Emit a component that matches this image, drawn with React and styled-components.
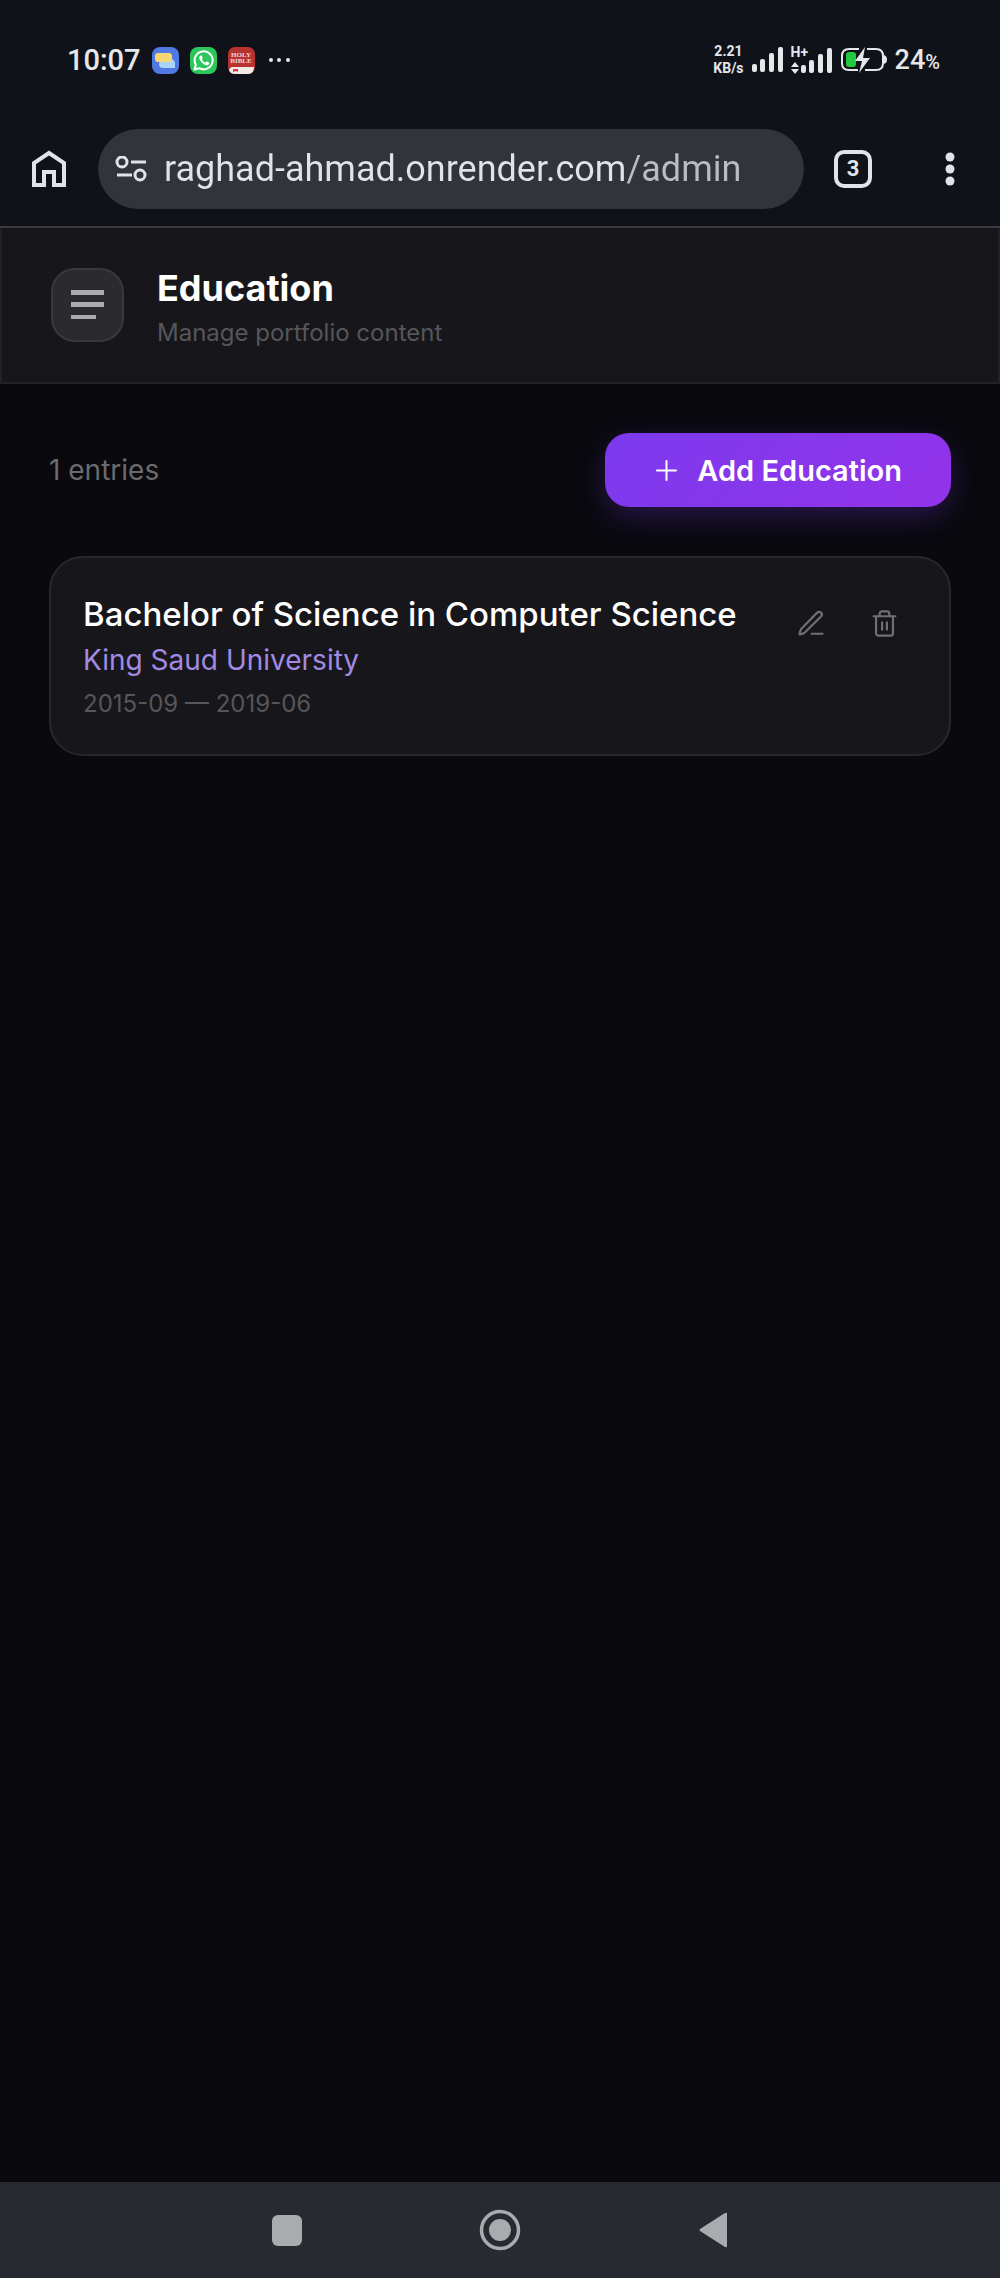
import React from "react";
import styled, { createGlobalStyle } from "styled-components";

const GlobalStyle = createGlobalStyle`
  *, *::before, *::after {
    box-sizing: border-box;
  }
  body {
    margin: 0;
    background: #09090e;
    color: #ffffff;
    font-family: "Inter", "Liberation Sans", sans-serif;
  }
  button {
    font: inherit;
    color: inherit;
    border: none;
    background: none;
    padding: 0;
    cursor: pointer;
  }
  h1, h2, p {
    margin: 0;
  }
  svg {
    display: block;
    flex-shrink: 0;
  }
`;

const entries = [
  {
    id: 1,
    degree: "Bachelor of Science in Computer Science",
    school: "King Saud University",
    start: "2015-09",
    end: "2019-06",
  },
];

const Signal = () => (
  <svg width="31" height="26" viewBox="0 0 31 26" fill="#e6e7ea">
    <rect x="0" y="17" width="5" height="8" rx="2" />
    <rect x="8" y="12" width="5" height="13" rx="2" />
    <rect x="17" y="6" width="5" height="19" rx="2" />
    <rect x="26" y="0" width="5" height="25" rx="2" />
  </svg>
);

const StatusBar = () => (
  <Status>
    <StatusGroup gap="11px">
      <Clock>10:07</Clock>
      <svg width="27" height="27" viewBox="0 0 27 27">
        <rect width="27" height="27" rx="8" fill="#5079e4" />
        <path d="M8 12h12q3 1 3 5v4H11q-4 0-4-4z" fill="#a9d3f8" />
        <rect x="3" y="6" width="17" height="9" rx="3" fill="#f8d673" />
      </svg>
      <svg width="27" height="27" viewBox="0 0 27 27" fill="none">
        <rect width="27" height="27" rx="8" fill="#2bc75b" />
        <path
          d="M4.500 22.500l1.300-4.800a9 9 0 1 1 3.500 3.500z"
          stroke="#fff"
          strokeWidth="2"
          strokeLinejoin="round"
        />
        <path
          d="M10.500 8.500c-2 1-1.500 3.500.5 6s5 4.500 7 3.500 1.500-2 1-2.500l-2-1c-.8-.3-1.200 1-1.800 1-1 0-3.200-2.300-3.200-3 0-.5 1-1 .7-1.700l-.9-2c-.3-.4-.8-.5-1.300-.3z"
          fill="#fff"
        />
      </svg>
      <svg width="27" height="27" viewBox="0 0 27 27">
        <rect width="27" height="27" rx="7" fill="#b8322f" />
        <path d="M1 23q1-3 4-3h21q0 7-6 7H7q-5 0-6-4z" fill="#f3e9e5" />
        <path d="M5 22h5v3l-2-1-3 1z" fill="#d33a44" />
        <text x="13" y="10" fontSize="7" fontWeight="700" textAnchor="middle" fill="#f0d5cf" fontFamily="Liberation Serif, serif">HOLY</text>
        <text x="13" y="16" fontSize="7" fontWeight="700" textAnchor="middle" fill="#f0d5cf" fontFamily="Liberation Serif, serif">BIBLE</text>
      </svg>
      <svg width="27" height="6" viewBox="0 0 27 6" fill="#e6e7ea">
        <circle cx="5" cy="3" r="2" />
        <circle cx="13" cy="3" r="2" />
        <circle cx="22" cy="3" r="2" />
      </svg>
    </StatusGroup>
    <StatusGroup gap="8px">
      <Speed>
        <span>2.21</span>
        <span>KB/s</span>
      </Speed>
      <Signal />
      <Network>
        <NetworkType>
          <span>H+</span>
          <svg width="8" height="12" viewBox="0 0 8 12" fill="#e6e7ea">
            <path d="M4 0l4 5H0zM4 12l4-5H0z" />
          </svg>
        </NetworkType>
        <Signal />
      </Network>
      <svg width="47" height="26" viewBox="0 0 47 26" fill="none">
        <path
          d="M19 2H9q-7 0-7 7v7q0 7 7 7h9M27 2h9q7 0 7 7v7q0 7-7 7H25"
          stroke="#e6e7ea"
          strokeWidth="2"
        />
        <rect x="6" y="5" width="10" height="15" rx="3" fill="#22c93d" />
        <path d="M25 0L15 14h7l-3 12 11-15h-7z" fill="#e6e7ea" />
        <path d="M44 8q3 1 3 4.500T44 17z" fill="#e6e7ea" />
      </svg>
      <Battery>
        24<small>%</small>
      </Battery>
    </StatusGroup>
  </Status>
);

const BrowserBar = () => (
  <Browser>
    <IconButton aria-label="Home" size="50px">
      <svg width="34" height="38" viewBox="0 0 34 38" fill="none" stroke="#dfe3ea" strokeWidth="4">
        <path d="M2 35V13L17 3l15 10v22H22V22H12v13z" />
      </svg>
    </IconButton>
    <AddressBar>
      <svg width="32" height="26" viewBox="0 0 32 26" fill="none" stroke="#dfe3ea" strokeWidth="3">
        <circle cx="7" cy="6" r="5" />
        <path d="M16 6h15M2 19h15" />
        <circle cx="25" cy="19" r="5" />
      </svg>
      <AddressInput
        aria-label="Address"
        type="text"
        defaultValue="raghad-ahmad.onrender.com/admin"
      />
    </AddressBar>
    <TabsButton aria-label="Open tabs">3</TabsButton>
    <IconButton aria-label="Menu" size="36px">
      <svg width="10" height="34" viewBox="0 0 10 34" fill="#dfe3ea">
        <circle cx="5" cy="5" r="4.500" />
        <circle cx="5" cy="17" r="4.500" />
        <circle cx="5" cy="29" r="4.500" />
      </svg>
    </IconButton>
  </Browser>
);

const Entry = ({ entry }) => (
  <Card>
    <div>
      <Degree>{entry.degree}</Degree>
      <School>{entry.school}</School>
      <Dates>
        {entry.start} — {entry.end}
      </Dates>
    </div>
    <Actions>
      <IconButton aria-label="Edit" size="66px">
        <svg width="29" height="29" viewBox="0 0 24 24" fill="none" stroke="#6f6f74" strokeWidth="1.800" strokeLinecap="round" strokeLinejoin="round">
          <path d="M13 20.500h9" />
          <path d="M17.500 3a2.200 2.200 0 0 1 3.200 3.200L7.500 19.300c-1 .9-2.500 1.400-4.500 1.700.2-2 .6-3.600 1.500-4.700z" />
        </svg>
      </IconButton>
      <IconButton aria-label="Delete" size="66px">
        <svg width="29" height="29" viewBox="0 0 24 24" fill="none" stroke="#6f6f74" strokeWidth="1.800" strokeLinecap="round" strokeLinejoin="round">
          <path d="M3 6h18M19 6v14a2 2 0 0 1-2 2H7a2 2 0 0 1-2-2V6M8 6V4a2 2 0 0 1 2-2h4a2 2 0 0 1 2 2v2M10 11v6M14 11v6" />
        </svg>
      </IconButton>
    </Actions>
  </Card>
);

const App = () => {
  return (
    <React.Fragment>
      <GlobalStyle />
      <Screen>
        <StatusBar />
        <BrowserBar />
        <Header>
          <MenuButton aria-label="Toggle sidebar">
            <svg width="33" height="30" viewBox="0 0 33 30" fill="#acacaf">
              <path d="M0 0h33v5H0zM0 12h33v5H0zM0 25h25v4H0z" />
            </svg>
          </MenuButton>
          <div>
            <Title>Education</Title>
            <Subtitle>Manage portfolio content</Subtitle>
          </div>
        </Header>
        <Main>
          <Toolbar>
            <Count>{entries.length} entries</Count>
            <AddButton>
              <svg width="21" height="21" viewBox="0 0 21 21" stroke="#fff" strokeWidth="2" strokeLinecap="round">
                <path d="M10.500 1v19M1 10.500h19" />
              </svg>
              Add Education
            </AddButton>
          </Toolbar>
          {entries.map((entry) => (
            <Entry key={entry.id} entry={entry} />
          ))}
        </Main>
        <NavBar>
          <IconButton aria-label="Recent apps" size="60px">
            <svg width="30" height="31" viewBox="0 0 30 31" fill="#a9acaf">
              <rect width="30" height="31" rx="6" />
            </svg>
          </IconButton>
          <IconButton aria-label="Home screen" size="60px">
            <svg width="42" height="42" viewBox="0 0 42 42" fill="none">
              <circle cx="21" cy="21" r="18.500" stroke="#a9acaf" strokeWidth="3.500" />
              <circle cx="21" cy="21" r="11" fill="#a9acaf" />
            </svg>
          </IconButton>
          <IconButton aria-label="Back" size="60px">
            <svg width="28" height="36" viewBox="0 0 28 36" fill="#a9acaf">
              <path d="M26 1q2-1 2 1v32q0 2-2 1L1 19q-1-1 0-2z" />
            </svg>
          </IconButton>
        </NavBar>
      </Screen>
    </React.Fragment>
  );
};

const Screen = styled.div`
  display: flex;
  flex-direction: column;
  min-height: 100vh;
`;

const Status = styled.div`
  display: flex;
  align-items: center;
  justify-content: space-between;
  height: 112px;
  padding: 8px 60px 0 67px;
  background: #0f1218;
  color: #e6e7ea;
  font-family: "Roboto", sans-serif;
`;

const StatusGroup = styled.div`
  display: flex;
  align-items: center;
  gap: ${(props) => props.gap};
`;

const Clock = styled.span`
  font-size: 29px;
  font-weight: 500;
`;

const Speed = styled.div`
  display: flex;
  flex-direction: column;
  align-items: center;
  font-size: 14px;
  font-weight: 700;
  line-height: 17px;
`;

const Network = styled.div`
  display: flex;
  align-items: flex-end;
`;

const NetworkType = styled.div`
  display: flex;
  flex-direction: column;
  gap: 4px;
  width: 10px;
  font-size: 14px;
  font-weight: 700;
  line-height: 12px;
`;

const Battery = styled.span`
  font-size: 27px;
  font-weight: 500;

  small {
    font-size: 20px;
  }
`;

const Browser = styled.div`
  display: flex;
  align-items: center;
  height: 116px;
  padding: 0 32px 0 24px;
  background: #0f1218;
  border-bottom: 2px solid #3b3c40;
`;

const IconButton = styled.button`
  display: flex;
  align-items: center;
  justify-content: center;
  width: ${(props) => props.size};
  height: ${(props) => props.size};
`;

const AddressBar = styled.div`
  display: flex;
  align-items: center;
  flex: 1;
  gap: 17px;
  height: 80px;
  margin: 0 30px 0 24px;
  padding: 0 17px;
  border-radius: 40px;
  background: #313439;
`;

// the path part of the address is dimmer than the host
const AddressInput = styled.input`
  flex: 1;
  min-width: 0;
  padding: 0;
  border: none;
  outline: none;
  background: linear-gradient(90deg, #dfe3ea 462px, #b9bcc2 462px);
  background-clip: text;
  color: transparent;
  font-family: "Roboto", sans-serif;
  font-size: 36px;
  line-height: 48px;
`;

const TabsButton = styled.button`
  width: 38px;
  height: 38px;
  margin-right: 60px;
  border: 4px solid #dfe3ea;
  border-radius: 10px;
  color: #dfe3ea;
  font-family: "Roboto", sans-serif;
  font-size: 22px;
  font-weight: 700;
  line-height: 30px;
`;

const Header = styled.header`
  display: flex;
  align-items: center;
  gap: 33px;
  height: 156px;
  padding: 0 49px;
  background: #17171b;
  border: 2px solid #222226;
  border-top: none;
`;

const MenuButton = styled.button`
  display: flex;
  align-items: center;
  justify-content: center;
  width: 73px;
  height: 74px;
  border: 2px solid #39393d;
  border-radius: 24px;
  background: #2b2b2f;
`;

const Title = styled.h1`
  font-size: 36px;
  font-weight: 700;
  line-height: 56px;
`;

const Subtitle = styled.p`
  color: #56565a;
  font-size: 24px;
  line-height: 34px;
`;

const Main = styled.main`
  flex: 1;
  padding: 49px;
`;

const Toolbar = styled.div`
  display: flex;
  align-items: center;
  justify-content: space-between;
  margin-bottom: 49px;
`;

const Count = styled.p`
  color: #6b6b6f;
  font-size: 28px;
`;

const AddButton = styled.button`
  display: flex;
  align-items: center;
  gap: 20px;
  height: 74px;
  padding: 0 49px 0 51px;
  border-radius: 24px;
  background: linear-gradient(135deg, #7c3aed, #9333ea);
  box-shadow: 0 10px 30px -2px rgba(124, 58, 237, 0.3);
  font-size: 29px;
  font-weight: 600;
`;

const Card = styled.article`
  display: flex;
  align-items: flex-start;
  justify-content: space-between;
  padding: 32px 32px 28px;
  border: 2px solid #28282c;
  border-radius: 34px;
  background: #17171b;
`;

const Degree = styled.h2`
  font-size: 33px;
  font-weight: 500;
  line-height: 48px;
`;

const School = styled.p`
  color: #a28ae4;
  font-size: 28px;
  line-height: 44px;
`;

const Dates = styled.p`
  color: #56565a;
  font-size: 24px;
  line-height: 44px;
`;

const Actions = styled.div`
  display: flex;
  gap: 8px;
`;

const NavBar = styled.nav`
  display: flex;
  align-items: center;
  justify-content: center;
  gap: 153px;
  height: 96px;
  background: #272a30;
`;

export default App;
